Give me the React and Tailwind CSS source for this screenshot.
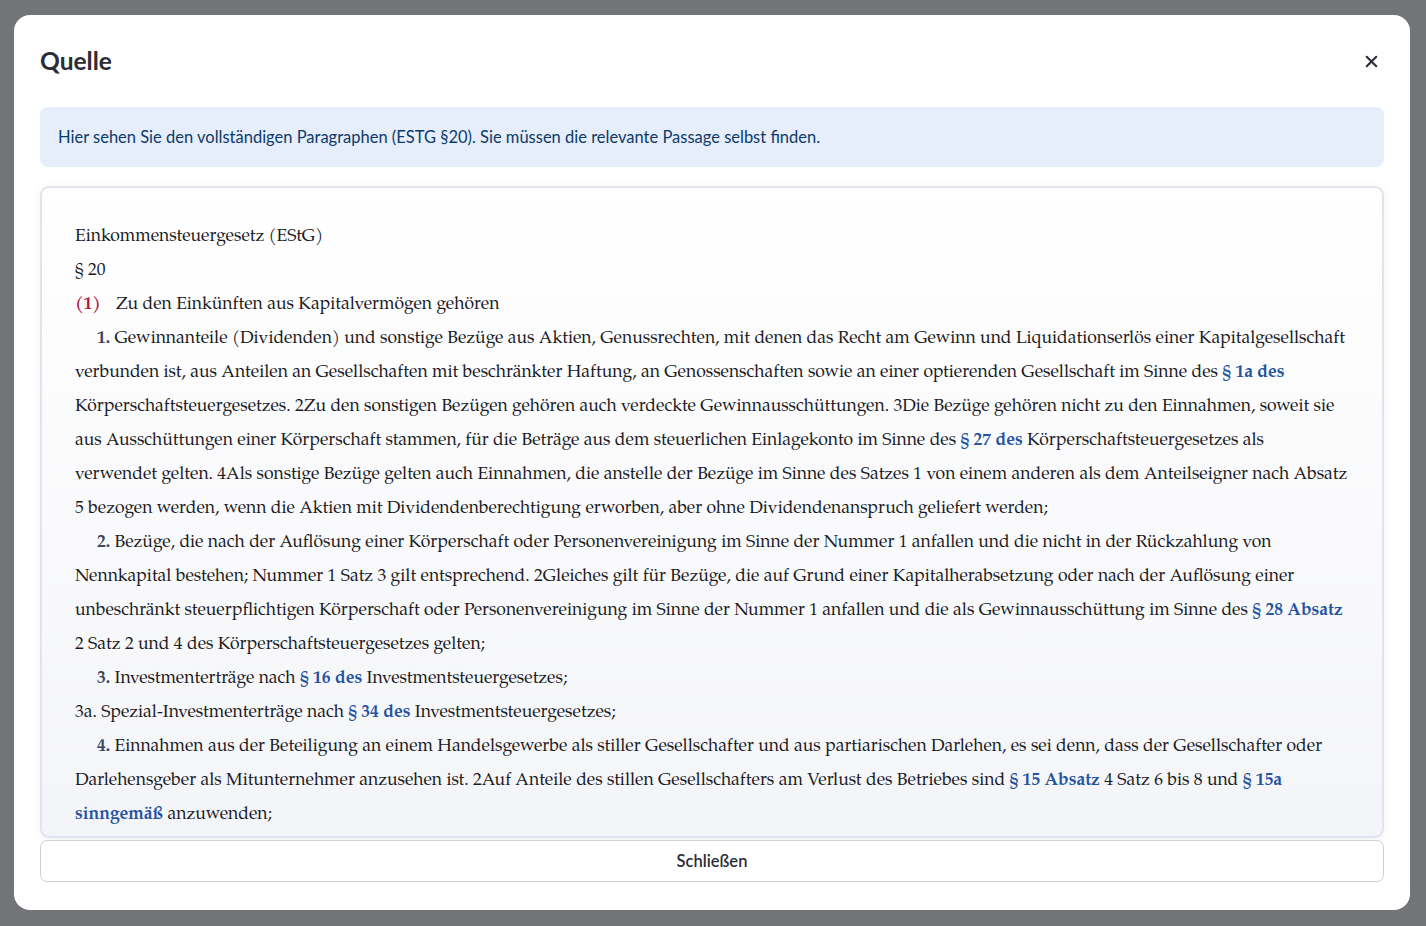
import React from "react";
import { X } from "lucide-react";

const L = ({ children }) => (
  <span className="font-bold text-[#2553a0]">{children}</span>
);
const N = ({ children }) => (
  <span className="font-bold text-[#3b4358]">{children}</span>
);
const Line = ({ children, indent, className = "" }) => (
  <div className={"whitespace-nowrap h-[34px] leading-[34px] " + (indent ? "pl-[22px] " : "") + className}>
    {children}
  </div>
);

export default function App() {
  return (
    <div className="w-[1426px] h-[926px] bg-[#737478] pt-[15px] pl-[14px] pr-[16px] pb-[16px] overflow-hidden">
      <div
        className="h-full bg-white rounded-[16px] flex flex-col pl-[26px] pr-[26px] pb-[28px]"
        style={{ fontFamily: "Lato, 'Noto Sans', sans-serif" }}
      >
        <div className="h-[92px] flex items-center justify-between shrink-0">
          <h2 className="text-[24.5px] font-bold text-[#2b2d36] leading-none">Quelle</h2>
          <button className="w-[24px] h-[24px] flex items-center justify-center mr-[1px] text-[#2b2d36]">
            <X size={19} strokeWidth={2.6} />
          </button>
        </div>
        <div className="h-[60px] shrink-0 bg-[#e5eefa] rounded-[8px] flex items-center px-[18px] text-[16.5px] text-[#0d3a6b]">
          Hier sehen Sie den vollständigen Paragraphen (ESTG §20). Sie müssen die relevante Passage selbst finden.
        </div>
        <div
          className="mt-[19px] flex-1 min-h-0 overflow-hidden border-2 border-[#dfe4ee] rounded-[9px] bg-linear-to-b from-white to-[#f4f5f8] shadow-[0_2px_10px_rgba(0,0,0,0.06)] px-[33px] pt-[32px] text-[17.5px] text-[#1a1a1f]"
          style={{ fontFamily: "'P052', 'TeX Gyre Pagella', 'Palatino Linotype', Palatino, 'Liberation Serif', serif" }}
        >
          <Line>Einkommensteuergesetz (EStG)</Line>
          <Line>§ 20</Line>
          <Line>
            <span className="font-bold text-[#b3163d] mr-[15px]">(1)</span>Zu den Einkünften aus Kapitalvermögen gehören
          </Line>
          <Line indent>
            <N>1.</N> Gewinnanteile (Dividenden) und sonstige Bezüge aus Aktien, Genussrechten, mit denen das Recht am Gewinn und Liquidationserlös einer Kapitalgesellschaft
          </Line>
          <Line>
            verbunden ist, aus Anteilen an Gesellschaften mit beschränkter Haftung, an Genossenschaften sowie an einer optierenden Gesellschaft im Sinne des <L>§ 1a des</L>
          </Line>
          <Line>
            Körperschaftsteuergesetzes. 2Zu den sonstigen Bezügen gehören auch verdeckte Gewinnausschüttungen. 3Die Bezüge gehören nicht zu den Einnahmen, soweit sie
          </Line>
          <Line>
            aus Ausschüttungen einer Körperschaft stammen, für die Beträge aus dem steuerlichen Einlagekonto im Sinne des <L>§ 27 des</L> Körperschaftsteuergesetzes als
          </Line>
          <Line>
            verwendet gelten. 4Als sonstige Bezüge gelten auch Einnahmen, die anstelle der Bezüge im Sinne des Satzes 1 von einem anderen als dem Anteilseigner nach Absatz
          </Line>
          <Line>
            5 bezogen werden, wenn die Aktien mit Dividendenberechtigung erworben, aber ohne Dividendenanspruch geliefert werden;
          </Line>
          <Line indent>
            <N>2.</N> Bezüge, die nach der Auflösung einer Körperschaft oder Personenvereinigung im Sinne der Nummer 1 anfallen und die nicht in der Rückzahlung von
          </Line>
          <Line>
            Nennkapital bestehen; Nummer 1 Satz 3 gilt entsprechend. 2Gleiches gilt für Bezüge, die auf Grund einer Kapitalherabsetzung oder nach der Auflösung einer
          </Line>
          <Line>
            unbeschränkt steuerpflichtigen Körperschaft oder Personenvereinigung im Sinne der Nummer 1 anfallen und die als Gewinnausschüttung im Sinne des <L>§ 28 Absatz</L>
          </Line>
          <Line>2 Satz 2 und 4 des Körperschaftsteuergesetzes gelten;</Line>
          <Line indent>
            <N>3.</N> Investmenterträge nach <L>§ 16 des</L> Investmentsteuergesetzes;
          </Line>
          <Line>
            3a. Spezial-Investmenterträge nach <L>§ 34 des</L> Investmentsteuergesetzes;
          </Line>
          <Line indent>
            <N>4.</N> Einnahmen aus der Beteiligung an einem Handelsgewerbe als stiller Gesellschafter und aus partiarischen Darlehen, es sei denn, dass der Gesellschafter oder
          </Line>
          <Line>
            Darlehensgeber als Mitunternehmer anzusehen ist. 2Auf Anteile des stillen Gesellschafters am Verlust des Betriebes sind <L>§ 15 Absatz</L> 4 Satz 6 bis 8 und <L>§ 15a</L>
          </Line>
          <Line>
            <L>sinngemäß</L> anzuwenden;
          </Line>
        </div>
        <button className="mt-[2px] h-[42px] shrink-0 w-full border border-[#d0d1d6] rounded-[7px] bg-white text-[16.5px] font-semibold text-[#2b2d36]">
          Schließen
        </button>
      </div>
    </div>
  );
}
